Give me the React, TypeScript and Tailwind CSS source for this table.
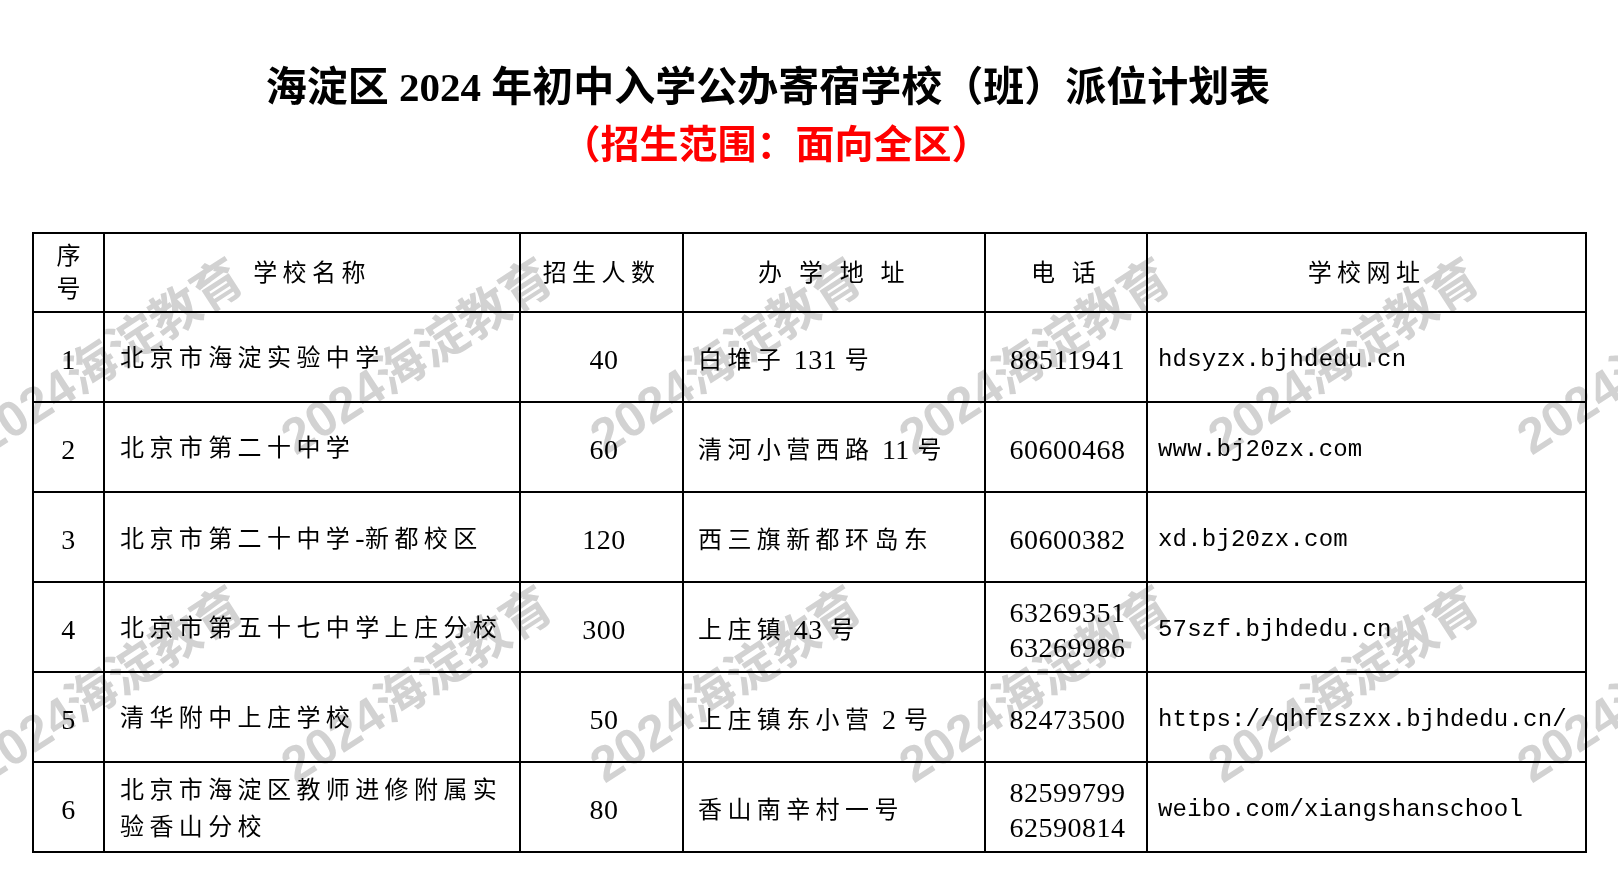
import React from 'react';

type Row = {
  no: string;
  name: string[];
  count: string;
  address: string;
  phones: string[];
  url: string;
};

const rows: Row[] = [
  { no: '1', name: ['北京市海淀实验中学'], count: '40', address: '白堆子 131 号', phones: ['88511941'], url: 'hdsyzx.bjhdedu.cn' },
  { no: '2', name: ['北京市第二十中学'], count: '60', address: '清河小营西路 11 号', phones: ['60600468'], url: 'www.bj20zx.com' },
  { no: '3', name: ['北京市第二十中学-新都校区'], count: '120', address: '西三旗新都环岛东', phones: ['60600382'], url: 'xd.bj20zx.com' },
  { no: '4', name: ['北京市第五十七中学上庄分校'], count: '300', address: '上庄镇 43 号', phones: ['63269351', '63269986'], url: '57szf.bjhdedu.cn' },
  { no: '5', name: ['清华附中上庄学校'], count: '50', address: '上庄镇东小营 2 号', phones: ['82473500'], url: 'https://qhfzszxx.bjhdedu.cn/' },
  { no: '6', name: ['北京市海淀区教师进修附属实', '验香山分校'], count: '80', address: '香山南辛村一号', phones: ['82599799', '62590814'], url: 'weibo.com/xiangshanschool' },
];

const serif = 'font-["Liberation_Serif","Noto_Sans_CJK_SC",serif]';

// split a string into CJK and latin runs so each gets its own size/spacing
const Mixed = ({ text }: { text: string }) => {
  const parts = text.match(/[\u3000-\u9fff\uff00-\uffef]+|[^\u3000-\u9fff\uff00-\uffef]+/g) || [];
  return (
    <>
      {parts.map((p, i) =>
        /[\u3000-\u9fff\uff00-\uffef]/.test(p) ? (
          <span key={i} className="text-[24px] tracking-[5.4px]">{p}</span>
        ) : (
          <span key={i} className="text-[28px] tracking-[0.5px]">{p}</span>
        )
      )}
    </>
  );
};

const Num = ({ children }: { children: React.ReactNode }) => (
  <span className="text-[28px] tracking-[0.5px]">{children}</span>
);

const cell = 'border-r-2 border-b-2 border-black flex items-center';
const body = `${cell} pt-[5px]`;
const head = `${cell} justify-center text-[24px] tracking-[5.4px] whitespace-pre`;

const marks = [108, 417, 726, 1035, 1344, 1653].flatMap((x) => [
  { x, y: 357 },
  { x, y: 685 },
]);

export default function App() {
  return (
    <div className={`relative w-[1618px] h-[880px] overflow-hidden bg-white text-black ${serif}`}>
      <div className="pt-[64px] pr-[82px] flex justify-center">
        <h1 className="text-[41px] leading-[46px] font-bold whitespace-nowrap [text-spacing-trim:space-all]">
          海淀区 2024 年初中入学公办寄宿学校（班）派位计划表
        </h1>
      </div>
      <div className="mt-[13px] pr-[66px] flex justify-center">
        <h2 className="text-[39px] leading-[44px] font-bold text-[#ff0000] whitespace-nowrap [text-spacing-trim:space-all]">
          （招生范围：面向全区）
        </h2>
      </div>

      <div className="ml-[32px] mt-[65px] w-[1555px] border-t-2 border-l-2 border-black grid grid-cols-[71px_416px_163px_302px_162px_439px] grid-rows-[79px_repeat(6,90px)]">
        {/* header */}
        <div className={`${cell} flex-col justify-center leading-[33px] text-[24px]`}>
          <span>序</span>
          <span>号</span>
        </div>
        <div className={head}>学校名称</div>
        <div className={head}>招生人数</div>
        <div className={head}>办 学 地 址</div>
        <div className={`${head} border-r`}>电 话</div>
        <div className={head}>学校网址</div>

        {rows.map((r) => (
          <React.Fragment key={r.no}>
            <div className={`${body} justify-center`}>
              <Num>{r.no}</Num>
            </div>
            <div className={`${body} pl-[15px] leading-[35px]`}>
              <div className="flex flex-col">
                {r.name.map((line) => (
                  <span key={line} className="whitespace-nowrap">
                    <Mixed text={line} />
                  </span>
                ))}
              </div>
            </div>
            <div className={`${body} justify-center pl-[5px]`}>
              <Num>{r.count}</Num>
            </div>
            <div className={`${body} pl-[14px] whitespace-pre`}>
              <Mixed text={r.address} />
            </div>
            <div className={`${body} justify-center pl-[3px] leading-[35px] border-r`}>
              <div className="flex flex-col items-center">
                {r.phones.map((p) => (
                  <Num key={p}>{p}</Num>
                ))}
              </div>
            </div>
            <div className={`${body} pl-[10px] font-["Liberation_Mono",monospace] text-[24px] tracking-[0.2px] whitespace-nowrap`}>
              {r.url}
            </div>
          </React.Fragment>
        ))}
      </div>

      {/* watermark */}
      {marks.map((m, i) => (
        <div
          key={i}
          className="absolute pointer-events-none mix-blend-multiply -translate-x-1/2 -translate-y-1/2 -rotate-[33deg] whitespace-nowrap font-['Liberation_Sans','Noto_Sans_CJK_SC',sans-serif] font-bold text-[50px] text-[#d2d2d2] leading-none"
          style={{ left: m.x, top: m.y }}
        >
          2024海淀教育
        </div>
      ))}
    </div>
  );
}
